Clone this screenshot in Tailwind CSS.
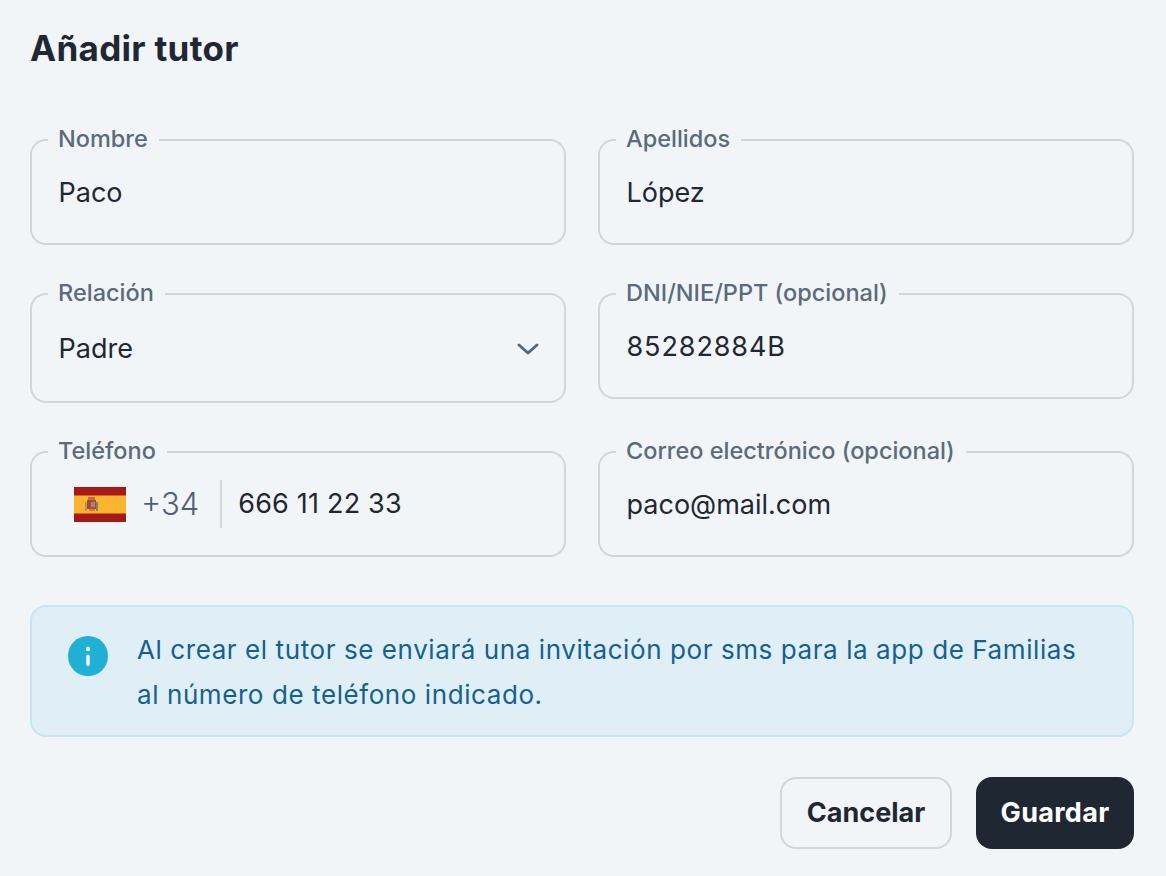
<!doctype html>
<html lang="es">
<head>
<meta charset="utf-8">
<script src="https://cdn.jsdelivr.net/npm/@tailwindcss/browser@4"></script>
</head>
<body class="bg-[#f1f5f8] font-['Inter',sans-serif] text-[#1f2733] w-[1166px] h-[876px] overflow-hidden">
<div class="pl-[30px] pt-[28px] pr-[32px]">
  <h1 class="text-[35px] leading-[40px] font-bold tracking-[0.3px]">Añadir tutor</h1>
  <div class="grid grid-cols-2 gap-x-[32px] mt-[57px]">
    <fieldset class="h-[120px] border-2 border-[#d0d6dc] rounded-[16px]">
      <legend class="ml-[16px] pl-[10px] pr-[11px] pb-[2px] text-[23.5px] leading-[28px] font-medium text-[#5a6b7b]">Nombre</legend>
      <div class="ml-[26.5px] text-[27px] leading-[36px] mt-[20px]">Paco</div>
    </fieldset>
    <fieldset class="h-[120px] border-2 border-[#d0d6dc] rounded-[16px]">
      <legend class="ml-[16px] pl-[10px] pr-[11px] pb-[2px] text-[23.5px] leading-[28px] font-medium text-[#5a6b7b]">Apellidos</legend>
      <div class="ml-[26.5px] text-[27px] leading-[36px] mt-[20px]">López</div>
    </fieldset>
    <fieldset class="h-[124px] mt-[34px] border-2 border-[#d0d6dc] rounded-[16px]">
      <legend class="ml-[16px] pl-[10px] pr-[11px] pb-[2px] text-[23.5px] leading-[28px] font-medium text-[#5a6b7b]">Relación</legend>
      <div class="ml-[26.5px] mr-[24px] flex items-center justify-between mt-[22px]">
        <span class="text-[27px] leading-[36px]">Padre</span>
        <svg class="w-[24px] h-[14px]" viewBox="0 0 24 14" fill="none" stroke="#56687a" stroke-width="3" stroke-linecap="round" stroke-linejoin="round"><path d="M3 3l9 8 9-8"/></svg>
      </div>
    </fieldset>
    <fieldset class="h-[120px] mt-[34px] border-2 border-[#d0d6dc] rounded-[16px]">
      <legend class="ml-[16px] pl-[10px] pr-[11px] pb-[2px] text-[23.5px] leading-[28px] font-medium text-[#5a6b7b]">DNI/NIE/PPT (opcional)</legend>
      <div class="ml-[26.5px] text-[27px] leading-[36px] mt-[20px] tracking-[0.9px]">85282884B</div>
    </fieldset>
    <fieldset class="h-[120px] mt-[34px] border-2 border-[#d0d6dc] rounded-[16px]">
      <legend class="ml-[16px] pl-[10px] pr-[11px] pb-[2px] text-[23.5px] leading-[28px] font-medium text-[#5a6b7b]">Teléfono</legend>
      <div class="ml-[42px] flex items-center mt-[13px] h-[48px]">
        <svg class="w-[52px] h-[35px] shrink-0" viewBox="0 0 52 35">
          <rect width="52" height="35" fill="#a31a17"/>
          <rect y="8" width="52" height="2" fill="#d9651f"/>
          <rect y="25" width="52" height="2" fill="#d9651f"/>
          <rect y="9" width="52" height="17" fill="#fab52f"/>
          <rect x="14" y="10" width="7" height="3" fill="#c2702f"/>
          <rect x="13" y="13" width="9" height="9" fill="#b5452c"/>
          <rect x="17" y="15" width="4" height="5" fill="#9a86a0"/>
          <rect x="11" y="15" width="2" height="9" fill="#a89c68"/>
          <rect x="22" y="15" width="2" height="9" fill="#7f8458"/>
          <rect x="15" y="22" width="6" height="2" fill="#d27a3a"/>
        </svg>
        <span class="ml-[15px] text-[31px] leading-[36px] text-[#4f6273] font-light">+34</span>
        <span class="ml-[21px] w-[2px] h-[48px] bg-[#d0d6dc]"></span>
        <span class="ml-[16px] text-[27px] leading-[36px] tracking-[0.2px]">666 11 22 33</span>
      </div>
    </fieldset>
    <fieldset class="h-[120px] mt-[34px] border-2 border-[#d0d6dc] rounded-[16px]">
      <legend class="ml-[16px] pl-[10px] pr-[11px] pb-[2px] text-[23.5px] leading-[28px] font-medium text-[#5a6b7b]">Correo electrónico (opcional)</legend>
      <div class="ml-[26.5px] text-[27px] leading-[36px] mt-[20px]">paco@mail.com</div>
    </fieldset>
  </div>
  <div class="mt-[48px] h-[132px] rounded-[16px] border-2 border-[#c4e6f0] bg-[#e0eff5] flex pl-[36px] pt-[20px]">
    <svg class="w-[40px] h-[40px] shrink-0 mt-[9px]" viewBox="0 0 40 40">
      <circle cx="20" cy="20" r="20" fill="#1fb0d3"/>
      <circle cx="20" cy="13" r="2.2" fill="#e8f6fa"/>
      <rect x="18.2" y="18.5" width="3.6" height="11.5" rx="1.8" fill="#e8f6fa"/>
    </svg>
    <p class="ml-[29px] text-[26px] leading-[45px] tracking-[0.58px] text-[#14618f]">Al crear el tutor se enviará una invitación por sms para la app de Familias<br>al número de teléfono indicado.</p>
  </div>
  <div class="flex justify-end gap-[24px] mt-[40px]">
    <button class="w-[172px] h-[72px] rounded-[16px] border-2 border-[#d0d6dc] text-[27px] font-bold">Cancelar</button>
    <button class="w-[158px] h-[72px] rounded-[16px] bg-[#1f2733] text-white text-[27px] font-bold tracking-[0.3px]">Guardar</button>
  </div>
</div>
</body>
</html>
